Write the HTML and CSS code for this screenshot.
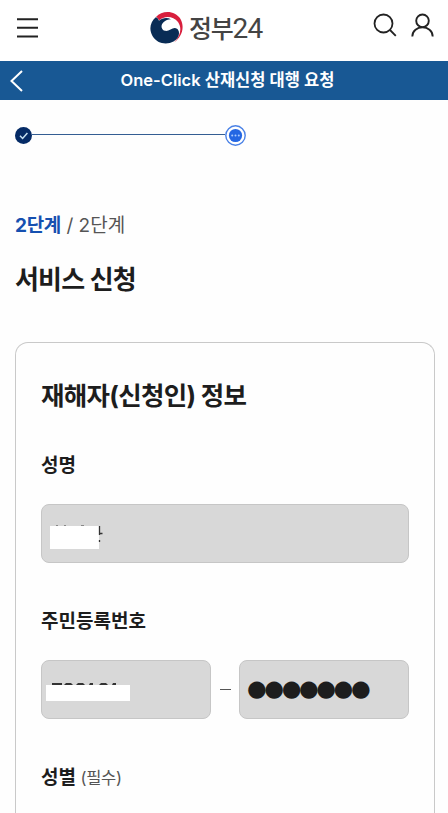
FILE: index.html
```html
<!DOCTYPE html>
<html lang="ko">
<head>
  <meta charset="utf-8">
  <meta name="viewport" content="width=device-width, initial-scale=1">
  <title>정부24</title>
  <link rel="stylesheet" href="styles.css">
</head>
<body>
  <header class="header">
    <button class="icon-btn menu-btn" aria-label="menu">
      <svg width="21" height="20" viewBox="0 0 21 20" stroke="#222" stroke-width="2"><path d="M0 1.2h21M0 9.8h21M0 18.4h21"/></svg>
    </button>
    <div class="logo">
      <svg width="34" height="34" viewBox="0 0 34 34">
        <path d="M6 6C12 -1 25 -1 30.500 8C35 16 32 26 24 31.500C31 24.500 32 16.500 28 11C23 4.500 14 4.500 9 9.500C8.500 8 7.500 6.500 6 6Z" fill="#d81f3d"/>
        <path d="M5.800 6.200C.5 10.500 -1.500 18 2.500 25C7 33 17 34 23.500 30.500C29.500 27 30.500 20.500 27 17.800C23 15 19.500 21 14.800 19.800C10.800 18.500 10.600 13.800 13.500 11.200C15.500 9.300 18.500 8.200 21 8.300C17 6.200 12.500 6.800 9 9.800C8.500 8.200 7.500 6.500 5.800 6.200Z" fill="#092c55"/>
      </svg>
      <span class="logo-text">정부<span class="logo-num">24</span></span>
    </div>
    <div class="header-right">
      <button class="icon-btn" aria-label="search">
        <svg width="24" height="24" viewBox="0 0 24 24" fill="none" stroke="#222" stroke-width="1.800"><circle cx="10.500" cy="10.500" r="9"/><path d="M17 17l5.800 5.800"/></svg>
      </button>
      <button class="icon-btn" aria-label="my page">
        <svg width="23" height="24" viewBox="0 0 23 24" fill="none" stroke="#222" stroke-width="1.900"><circle cx="11.500" cy="7.800" r="6.300"/><path d="M1.300 23.500C1.300 11.300 21.700 11.300 21.700 23.500"/></svg>
      </button>
    </div>
  </header>

  <div class="title-bar">
    <svg class="back" width="13" height="22" viewBox="0 0 13 22" fill="none" stroke="#fff" stroke-width="2"><path d="M12 1L1.500 11L12 21"/></svg>
    <span class="title-text">One-Click 산재신청 대행 요청</span>
  </div>

  <main class="content">
    <div class="stepper">
      <svg width="17" height="17" viewBox="0 0 17 17"><circle cx="8.500" cy="8.500" r="8.500" fill="#052b66"/><path d="M5 8.700l2.600 2.700l4.800-5.500" fill="none" stroke="#c6e0f0" stroke-width="1.500"/></svg>
      <span class="step-line"></span>
      <svg width="21" height="21" viewBox="0 0 21 21"><circle cx="10.500" cy="10.500" r="9.700" fill="#fff" stroke="#4b82e6" stroke-width="1.400"/><circle cx="10.500" cy="10.500" r="6.600" fill="#2467e3"/><g fill="#a9cbff"><circle cx="7.200" cy="10.500" r="1"/><circle cx="10.500" cy="10.500" r="1"/><circle cx="13.800" cy="10.500" r="1"/></g></svg>
    </div>

    <p class="step-text"><strong>2단계</strong> / 2단계</p>
    <h1 class="page-title">서비스 신청</h1>

    <section class="card">
      <h2 class="card-title">재해자(신청인) 정보</h2>

      <div class="label">성명</div>
      <div class="field name-field">
        <span class="mask mask-name"></span>
        <svg class="name-edge" width="54" height="20" viewBox="0 0 54 20" stroke="#333" fill="none"><path d="M6 .5h2M14 .5h2M31 .5h3" stroke="#888"/><path d="M49.500 1v9M49.500 8.500h3M49.500 15v2" stroke-width="1.300"/></svg>
      </div>

      <div class="label">주민등록번호</div>
      <div class="field-row">
        <div class="field id-field">
          <span class="mask mask-id"></span>
          <svg class="id-edge" width="66" height="2" viewBox="0 0 66 2" fill="#333"><path d="M0 0h10v2h-10zM14 0h5l2 2h-9zM26 0h5l2 2h-9zM38 0h3v2h-4zM49 0h5l2 2h-9zM61 0h3v2h-4z"/></svg>
        </div>
        <span class="dash"></span>
        <div class="field dots">●●●●●●●</div>
      </div>

      <div class="label last">성별 <span class="required">(필수)</span></div>
    </section>
  </main>
</body>
</html>
```

FILE: styles.css
```css
* {
  box-sizing: border-box;
}
body {
  margin: 0;
  background: #fefefe;
  color: #1d1d1d;
  font-family: Inter, "Noto Sans CJK KR", sans-serif;
}
.header {
  display: flex;
  align-items: flex-start;
  height: 61px;
  padding: 0 14px 0 17px;
  background: #fff;
}
.icon-btn {
  display: block;
  padding: 0;
  border: 0;
  background: none;
}
.icon-btn svg,
.logo svg {
  display: block;
}
.menu-btn {
  width: 21px;
  height: 20px;
  margin-top: 18px;
}
.logo {
  display: flex;
  gap: 5px;
  height: 34px;
  margin-top: 11px;
  margin-left: 112px;
}
.logo-text {
  color: #444;
  font: 500 25px/32px "Noto Sans CJK KR", sans-serif;
  letter-spacing: -1.3px;
  white-space: nowrap;
}
.logo-num {
  font-family: Roboto, sans-serif;
  font-size: 28px;
  font-weight: 400;
  letter-spacing: -0.6px;
}
.header-right {
  display: flex;
  gap: 14px;
  margin-top: 13px;
  margin-left: auto;
}
.title-bar {
  display: flex;
  align-items: center;
  height: 39px;
  padding: 0 10px;
  background: #185894;
  color: #fff;
}
.title-text {
  flex: 1;
  margin-right: 6px;
  font-size: 16.5px;
  font-weight: 600;
  line-height: 35px;
  text-align: center;
  white-space: nowrap;
}
.content {
  padding: 25px 13px 0 15px;
}
.stepper {
  display: flex;
  align-items: center;
  width: 231px;
  height: 21px;
}
.step-line {
  flex: 1;
  height: 1.5px;
  margin-top: -2px;
  background: #345e93;
}
.step-text {
  margin: 66px 0 0;
  color: #555;
  font-size: 19px;
  line-height: 28px;
}
.step-text strong {
  color: #1550b0;
  font-weight: 700;
  letter-spacing: -0.3px;
}
.page-title {
  margin: 21px 0 0;
  font-size: 26px;
  font-weight: 700;
  line-height: 38px;
  letter-spacing: -0.8px;
}
.card {
  height: 471px;
  margin-top: 43px;
  padding: 34px 25px 0;
  border: 1px solid #c9c9c9;
  border-bottom: 0;
  border-radius: 13px 13px 0 0;
}
.card-title {
  margin: 0 0 37px;
  font-size: 25.5px;
  font-weight: 700;
  line-height: 38px;
  letter-spacing: -0.7px;
  white-space: nowrap;
}
.label {
  height: 28px;
  margin-bottom: 24px;
  font-size: 19px;
  font-weight: 700;
  line-height: 28px;
}
.label.last {
  margin: 0;
}
.required {
  color: #555;
  font-size: 16.5px;
  font-weight: 400;
  letter-spacing: -0.3px;
}
.field {
  position: relative;
  height: 59px;
  margin-bottom: 45px;
  border: 1px solid #c6c6c6;
  border-radius: 8px;
  background: #d8d8d8;
}
.field-row {
  display: flex;
  align-items: center;
  height: 59px;
  margin-bottom: 45px;
}
.field-row .field {
  width: 170px;
  margin: 0;
}
.dash {
  width: 11px;
  height: 1.5px;
  margin: 0 8px 0 9px;
  background: #555;
}
.mask {
  position: absolute;
  background: #fff;
}
.mask-name {
  left: 8px;
  top: 21px;
  width: 49px;
  height: 23px;
}
.name-edge {
  position: absolute;
  left: 8px;
  top: 20px;
}
.mask-id {
  left: 4px;
  top: 24px;
  width: 84px;
  height: 16px;
}
.id-edge {
  position: absolute;
  left: 10px;
  top: 22px;
}
.dots {
  padding-left: 7px;
  font-family: "DejaVu Sans", sans-serif;
  font-size: 22.6px;
  line-height: 55px;
  letter-spacing: -2.4px;
  white-space: nowrap;
}
```
